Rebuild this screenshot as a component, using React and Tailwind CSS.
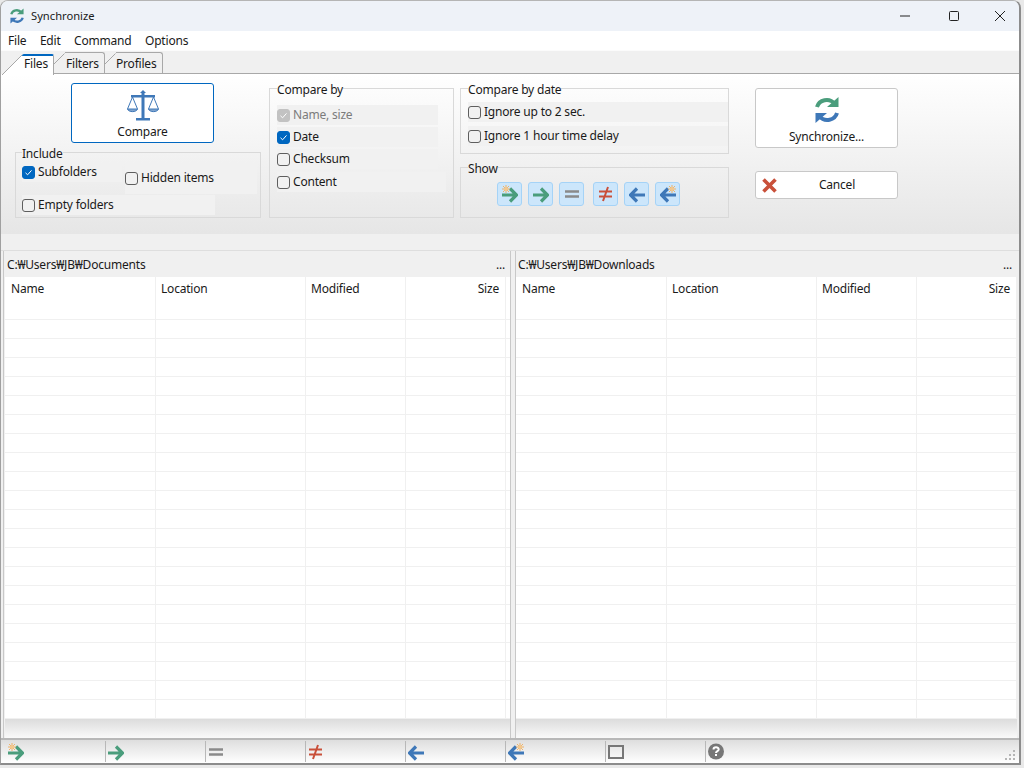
const FONT = '"Noto Sans","Noto Sans CJK KR",sans-serif';
const GREEN = '#4a9d7c', BLUE = '#3f78b8', RED = '#c9503a', GRAY = '#8a8a8a';

function Star({ x, y }) {
  return (
    <g stroke="#eeb268" strokeWidth="1" transform={`translate(${x} ${y})`}>
      <path d="M0 -4V4M-4 0H4M-3 -3L3 3M-3 3L3 -3" />
      <circle r="2" fill="#f3c88e" stroke="none" />
    </g>
  );
}
function Glyph({ kind }) {
  const right = <path d="M0 10H13M8 3.5L14.5 10L8 16.5" fill="none" stroke={GREEN} strokeWidth="3.2" />;
  const left = <path d="M16 10H3M8 3.5L1.5 10L8 16.5" fill="none" stroke={BLUE} strokeWidth="3.2" />;
  return (
    <svg width="16" height="18" viewBox="0 0 16 18" className="block">
      {kind === 'newR' && <>{right}<Star x={4} y={4} /></>}
      {kind === 'r' && right}
      {kind === 'eq' && <path d="M1 6.5H15M1 11.5H15" stroke={GRAY} strokeWidth="2.4" />}
      {kind === 'ne' && <path d="M1 6.5H14M1 11.5H14M10 2L5 16" stroke={RED} strokeWidth="2" fill="none" />}
      {kind === 'l' && left}
      {kind === 'newL' && <>{left}<Star x={12} y={4} /></>}
      {kind === 'box' && <rect x="1" y="3" width="14" height="12" fill="none" stroke="#777" strokeWidth="2" />}
      {kind === 'help' && (
        <>
          <circle cx="8" cy="8.5" r="8" fill="#777" />
          <path d="M5.5 6.5C5.5 3.6 10.7 3.6 10.7 6.4C10.7 8.2 8 8 8 10" fill="none" stroke="#fff" strokeWidth="2" />
          <rect x="7" y="11" width="2" height="2" fill="#fff" />
        </>
      )}
    </svg>
  );
}
function SyncIcon({ w, h }) {
  return (
    <svg width={w} height={h} viewBox="0 0 24 28" className="block">
      <path d="M2 11C4 4 14 1 20 8" fill="none" stroke={GREEN} strokeWidth="4" />
      <path d="M23.5 1V11H12Z" fill={GREEN} />
      <path d="M22 17C20 24 10 27 4 20" fill="none" stroke={BLUE} strokeWidth="4" />
      <path d="M0.5 27V17H12Z" fill={BLUE} />
    </svg>
  );
}
function Scales() {
  return (
    <svg width="34" height="32" viewBox="0 0 34 32" className="block">
      <g fill={BLUE}>
        <path d="M15.5 3H18.5V28H15.5Z" />
        <path d="M17 0L20 3H14Z" />
        <path d="M5 5H29V7.5H5Z" />
        <path d="M10 28H24V30.5H10Z" />
      </g>
      <path d="M1.5 19H11.5C10.5 22.5 2.5 22.5 1.5 19Z" fill="#7fa4cf" stroke={BLUE} strokeWidth="1" />
      <path d="M22.5 19H32.5C31.5 22.5 23.5 22.5 22.5 19Z" fill="#7fa4cf" stroke={BLUE} strokeWidth="1" />
      <path d="M1.5 19L6.5 7L11.5 19M22.5 19L27.5 7L32.5 19" fill="none" stroke={BLUE} strokeWidth="1" />
    </svg>
  );
}
function Check({ state }) {
  const cls = state === 'on'
    ? 'bg-[#0067c0] border-[#0067c0]'
    : state === 'off-dis'
      ? 'bg-[#c2c2c2] border-[#c2c2c2]'
      : 'bg-transparent border-[#5e5e5e]';
  return (
    <span className={`w-[13px] h-[13px] rounded-[3px] border shrink-0 flex items-center justify-center ${cls}`}>
      {state !== 'off' && (
        <svg width="9" height="9" viewBox="0 0 9 9"><path d="M1.5 4.8L3.6 6.8L7.5 2.4" fill="none" stroke="#fff" strokeWidth="1" /></svg>
      )}
    </span>
  );
}
function CheckItem({ label, state = 'off', className = '', textClass = '' }) {
  return (
    <div className={`flex items-center gap-[3px] bg-[#f1f1f1] h-5 ${className}`}>
      <Check state={state} />
      <span className={`${state === 'off-dis' ? 'text-[#7b7b7b]' : ''} ${textClass}`}>{label}</span>
    </div>
  );
}
function Group({ title, className = '', legendClass = 'ml-[7px]', children }) {
  return (
    <fieldset className={`border border-[#d9d9d9] min-w-0 ${className}`}>
      <legend className={`h-4 leading-[20px] px-0 ${legendClass}`}>{title}</legend>
      {children}
    </fieldset>
  );
}
function ShowBtn({ kind, className = '' }) {
  return (
    <button className={`w-[25px] h-[24px] rounded-[3px] border border-[#a5d3f7] bg-[#cce6fb] flex items-center justify-center ${className}`}>
      <Glyph kind={kind} />
    </button>
  );
}
const COLS = ['w-[151px]', 'w-[150px]', 'w-[100px]', 'w-[100px]'];
function Pane({ path, className = '' }) {
  return (
    <div className={`flex flex-col min-w-0 ${className}`}>
      <div className="h-[26px] bg-[#f0f0f0] flex items-center justify-between pl-[2px] pr-[5px] pt-[1px]">
        <span>{path}</span>
        <span>...</span>
      </div>
      <div className="flex-1 bg-white flex flex-col">
        <div className="flex h-6 shrink-0">
          {['Name', 'Location', 'Modified', 'Size'].map((t, i) => (
            <div key={t} className={`flex items-center pr-[6px] border-r border-[#f0f0f0] ${i === 0 ? 'pl-[6px]' : 'pl-[5px]'} ${COLS[i]} ${i === 3 ? 'justify-end' : ''}`}>{t}</div>
          ))}
        </div>
        {Array.from({ length: 22 }).map((_, i) => (
          <div key={i} className="flex h-[19px] shrink-0 border-b border-[#f0f0f0]">
            {COLS.map((c, j) => (
              <div key={j} className={`border-r border-[#f0f0f0] ${c}`} />
            ))}
          </div>
        ))}
      </div>
      <div className="h-[19px] shrink-0 bg-gradient-to-b from-[#dcdcdc] to-[#fafafa]" />
    </div>
  );
}
const TAB_TOP = 'border-t border-r border-[#a8a8a8] rounded-tr-[3px]';

export default function App() {
  return (
    <div className="w-[1024px] h-[768px] bg-[#e9e9e9] overflow-hidden text-[12px] tracking-[-0.2px] text-[#1a1a1a]" style={{ fontFamily: FONT }}>
      <div className="w-[1021px] h-[765px] rounded-t-lg overflow-hidden flex flex-col border-l border-t border-r-2 border-b-2 border-l-[#a0a0a0] border-t-[#b5b5b5] border-r-[#8c8c8c] border-b-[#8c8c8c] box-border bg-[#f0f0f0]">
        {/* title bar */}
        <div className="h-[30px] shrink-0 bg-[#eef2f8] flex items-center pl-[9px]">
          <SyncIcon w={14} h={16} />
          <span className="ml-[7px] text-[11.2px] tracking-normal">Synchronize</span>
          <div className="ml-auto flex items-center">
            <div className="w-[46px] flex justify-center"><svg width="12" height="12" viewBox="0 0 12 12"><path d="M1 6H11" stroke="#222" strokeWidth="1" /></svg></div>
            <div className="w-[46px] ml-[3px] flex justify-center"><svg width="12" height="12" viewBox="0 0 12 12"><rect x="1.5" y="1.5" width="9" height="9" rx="1" fill="none" stroke="#222" strokeWidth="1" /></svg></div>
            <div className="w-[38px] ml-[4px] flex justify-center"><svg width="12" height="12" viewBox="0 0 12 12"><path d="M1 1L11 11M11 1L1 11" stroke="#222" strokeWidth="1" /></svg></div>
          </div>
        </div>
        {/* menu */}
        <div className="h-[19px] shrink-0 bg-white flex items-center gap-[13.5px] pl-[7px]">
          <span>File</span><span>Edit</span><span>Command</span><span>Options</span>
        </div>
        {/* tabs */}
        <div className="h-[24px] shrink-0 bg-[#f0f0f0] pt-[2px] flex items-end border-t border-[#fbfbfb]">
          <div className="relative flex items-end h-[21px] w-[52px] ml-[1px] z-10 -mb-[1px]">
            <svg width="20" height="21" viewBox="0 0 20 21" className="block shrink-0"><path d="M0 21L20 1V21Z" fill="#fff" /><path d="M0 21L20 1" stroke="#a8a8a8" /></svg>
            <div className="flex-1 h-[21px] bg-white border-t-2 border-t-[#0067c0] border-r border-r-[#a8a8a8] rounded-t-[2px] flex items-center pl-[2px] pb-[3px]">Files</div>
          </div>
          <div className="flex items-end h-[21px] w-[51px] border-b border-[#a8a8a8]">
            <svg width="11" height="20" viewBox="0 0 11 20" className="block shrink-0 self-start"><path d="M0 11L10.5 0.5" stroke="#a8a8a8" fill="none" /></svg>
            <div className={`flex-1 h-[21px] flex items-center pl-[1px] pt-[1px] ${TAB_TOP}`}>Filters</div>
          </div>
          <div className="flex items-end h-[21px] w-[58px] border-b border-[#a8a8a8]">
            <svg width="11" height="20" viewBox="0 0 11 20" className="block shrink-0 self-start"><path d="M0 11L10.5 0.5" stroke="#a8a8a8" fill="none" /></svg>
            <div className={`flex-1 h-[21px] flex items-center pt-[1px] ${TAB_TOP}`}>Profiles</div>
          </div>
          <div className="flex-1 h-[1px] bg-[#a8a8a8]" />
        </div>
        {/* control panel */}
        <div className="h-[160px] shrink-0 bg-gradient-to-b from-white to-[#e6e6e6] flex pl-[14px] pt-[6px]">
          <div className="w-[246px] flex flex-col">
            <button className="mt-[3px] ml-[56px] w-[143px] h-[60px] bg-white border border-[#0067c0] rounded-[3px] flex flex-col items-center pt-[6px]">
              <Scales />
              <span className="mt-[1px]">Compare</span>
            </button>
            <Group title="Include" legendClass="ml-[6px]" className="mt-[1px] h-[74px]">
              <div className="pl-[6px] pt-[3px] flex items-start">
                <CheckItem label="Subfolders" state="on" className="w-[100px] !h-[19px]" textClass="-translate-y-[1px]" />
                <CheckItem label="Hidden items" className="ml-[3px] w-[132px] !h-[31px]" textClass="-translate-y-[1px]" />
              </div>
              <div className="pl-[6px] mt-[1px]">
                <CheckItem label="Empty folders" className="w-[193px]" />
              </div>
            </Group>
          </div>
          <Group title="Compare by" className="ml-[8px] w-[185px] h-[138px]">
            <div className="pl-[7px] pt-[9px] flex flex-col">
              <CheckItem label="Name, size" state="off-dis" className="w-[161px]" />
              <CheckItem label="Date" state="on" className="w-[161px] mt-[2px]" />
              <CheckItem label="Checksum" className="w-[161px] mt-[2px]" />
              <CheckItem label="Content" className="w-[169px] mt-[3px]" />
            </div>
          </Group>
          <div className="ml-[6px] w-[269px] flex flex-col">
            <Group title="Compare by date" className="h-[74px]">
              <div className="pl-[7px] pt-[6px] flex flex-col">
                <CheckItem label="Ignore up to 2 sec." />
                <CheckItem label="Ignore 1 hour time delay" className="mt-[4px]" />
              </div>
            </Group>
            <Group title="Show" className="mt-[5px] h-[59px]">
              <div className="pl-[36px] pt-[7px] flex">
                <ShowBtn kind="newR" />
                <ShowBtn kind="r" className="ml-[6px]" />
                <ShowBtn kind="eq" className="ml-[6px]" />
                <ShowBtn kind="ne" className="ml-[9px]" />
                <ShowBtn kind="l" className="ml-[6px]" />
                <ShowBtn kind="newL" className="ml-[6px]" />
              </div>
            </Group>
          </div>
          <div className="ml-[26px] w-[143px] flex flex-col pt-[8px]">
            <button className="h-[60px] bg-white border border-[#c8c8c8] rounded-[3px] flex flex-col items-center pt-[7px]">
              <SyncIcon w={24} h={28} />
              <span className="mt-[4px]">Synchronize...</span>
            </button>
            <button className="mt-[23px] h-[28px] bg-white border border-[#c8c8c8] rounded-[3px] flex items-center pl-[6px]">
              <svg width="15" height="15" viewBox="0 0 15 15" className="block shrink-0"><path d="M1.5 1.5L13.5 13.5M13.5 1.5L1.5 13.5" stroke={RED} strokeWidth="3.6" /></svg>
              <span className="flex-1 text-center">Cancel</span>
            </button>
          </div>
        </div>
        <div className="h-[16px] shrink-0 bg-[#f0f0f0]" />
        {/* panes */}
        <div className="h-[488px] shrink-0 flex pl-[2px] pr-[2px] border-t border-[#dedede]">
          <Pane path="C:₩Users₩JB₩Documents" className="w-[508px] border-l border-[#c8c8c8] pl-[1px] border-r" />
          <div className="w-[4px] bg-[#f0f0f0]" />
          <Pane path="C:₩Users₩JB₩Downloads" className="flex-1 border-l border-[#c8c8c8]" />
        </div>
        {/* status */}
        <div className="relative flex-1 border-t-2 border-[#b8b8b8] bg-gradient-to-b from-[#dedede] to-white flex items-center">
          {['newR', 'r', 'eq', 'ne', 'l', 'newL', 'box', 'help'].map((k, i) => (
            <div key={k} className={`w-[100px] h-[21px] flex items-center pl-[2px] ${i === 0 ? 'ml-[4px] pl-[3px]' : 'border-l border-[#b8b8b8]'}`}>
              <Glyph kind={k} />
            </div>
          ))}
          <svg width="12" height="12" viewBox="0 0 12 12" className="absolute right-[2px] bottom-[1px]">
            <g fill="#b5b5b5">
              <rect x="8" y="0" width="2" height="2" /><rect x="4" y="4" width="2" height="2" /><rect x="8" y="4" width="2" height="2" />
              <rect x="0" y="8" width="2" height="2" /><rect x="4" y="8" width="2" height="2" /><rect x="8" y="8" width="2" height="2" />
            </g>
          </svg>
        </div>
      </div>
    </div>
  );
}
